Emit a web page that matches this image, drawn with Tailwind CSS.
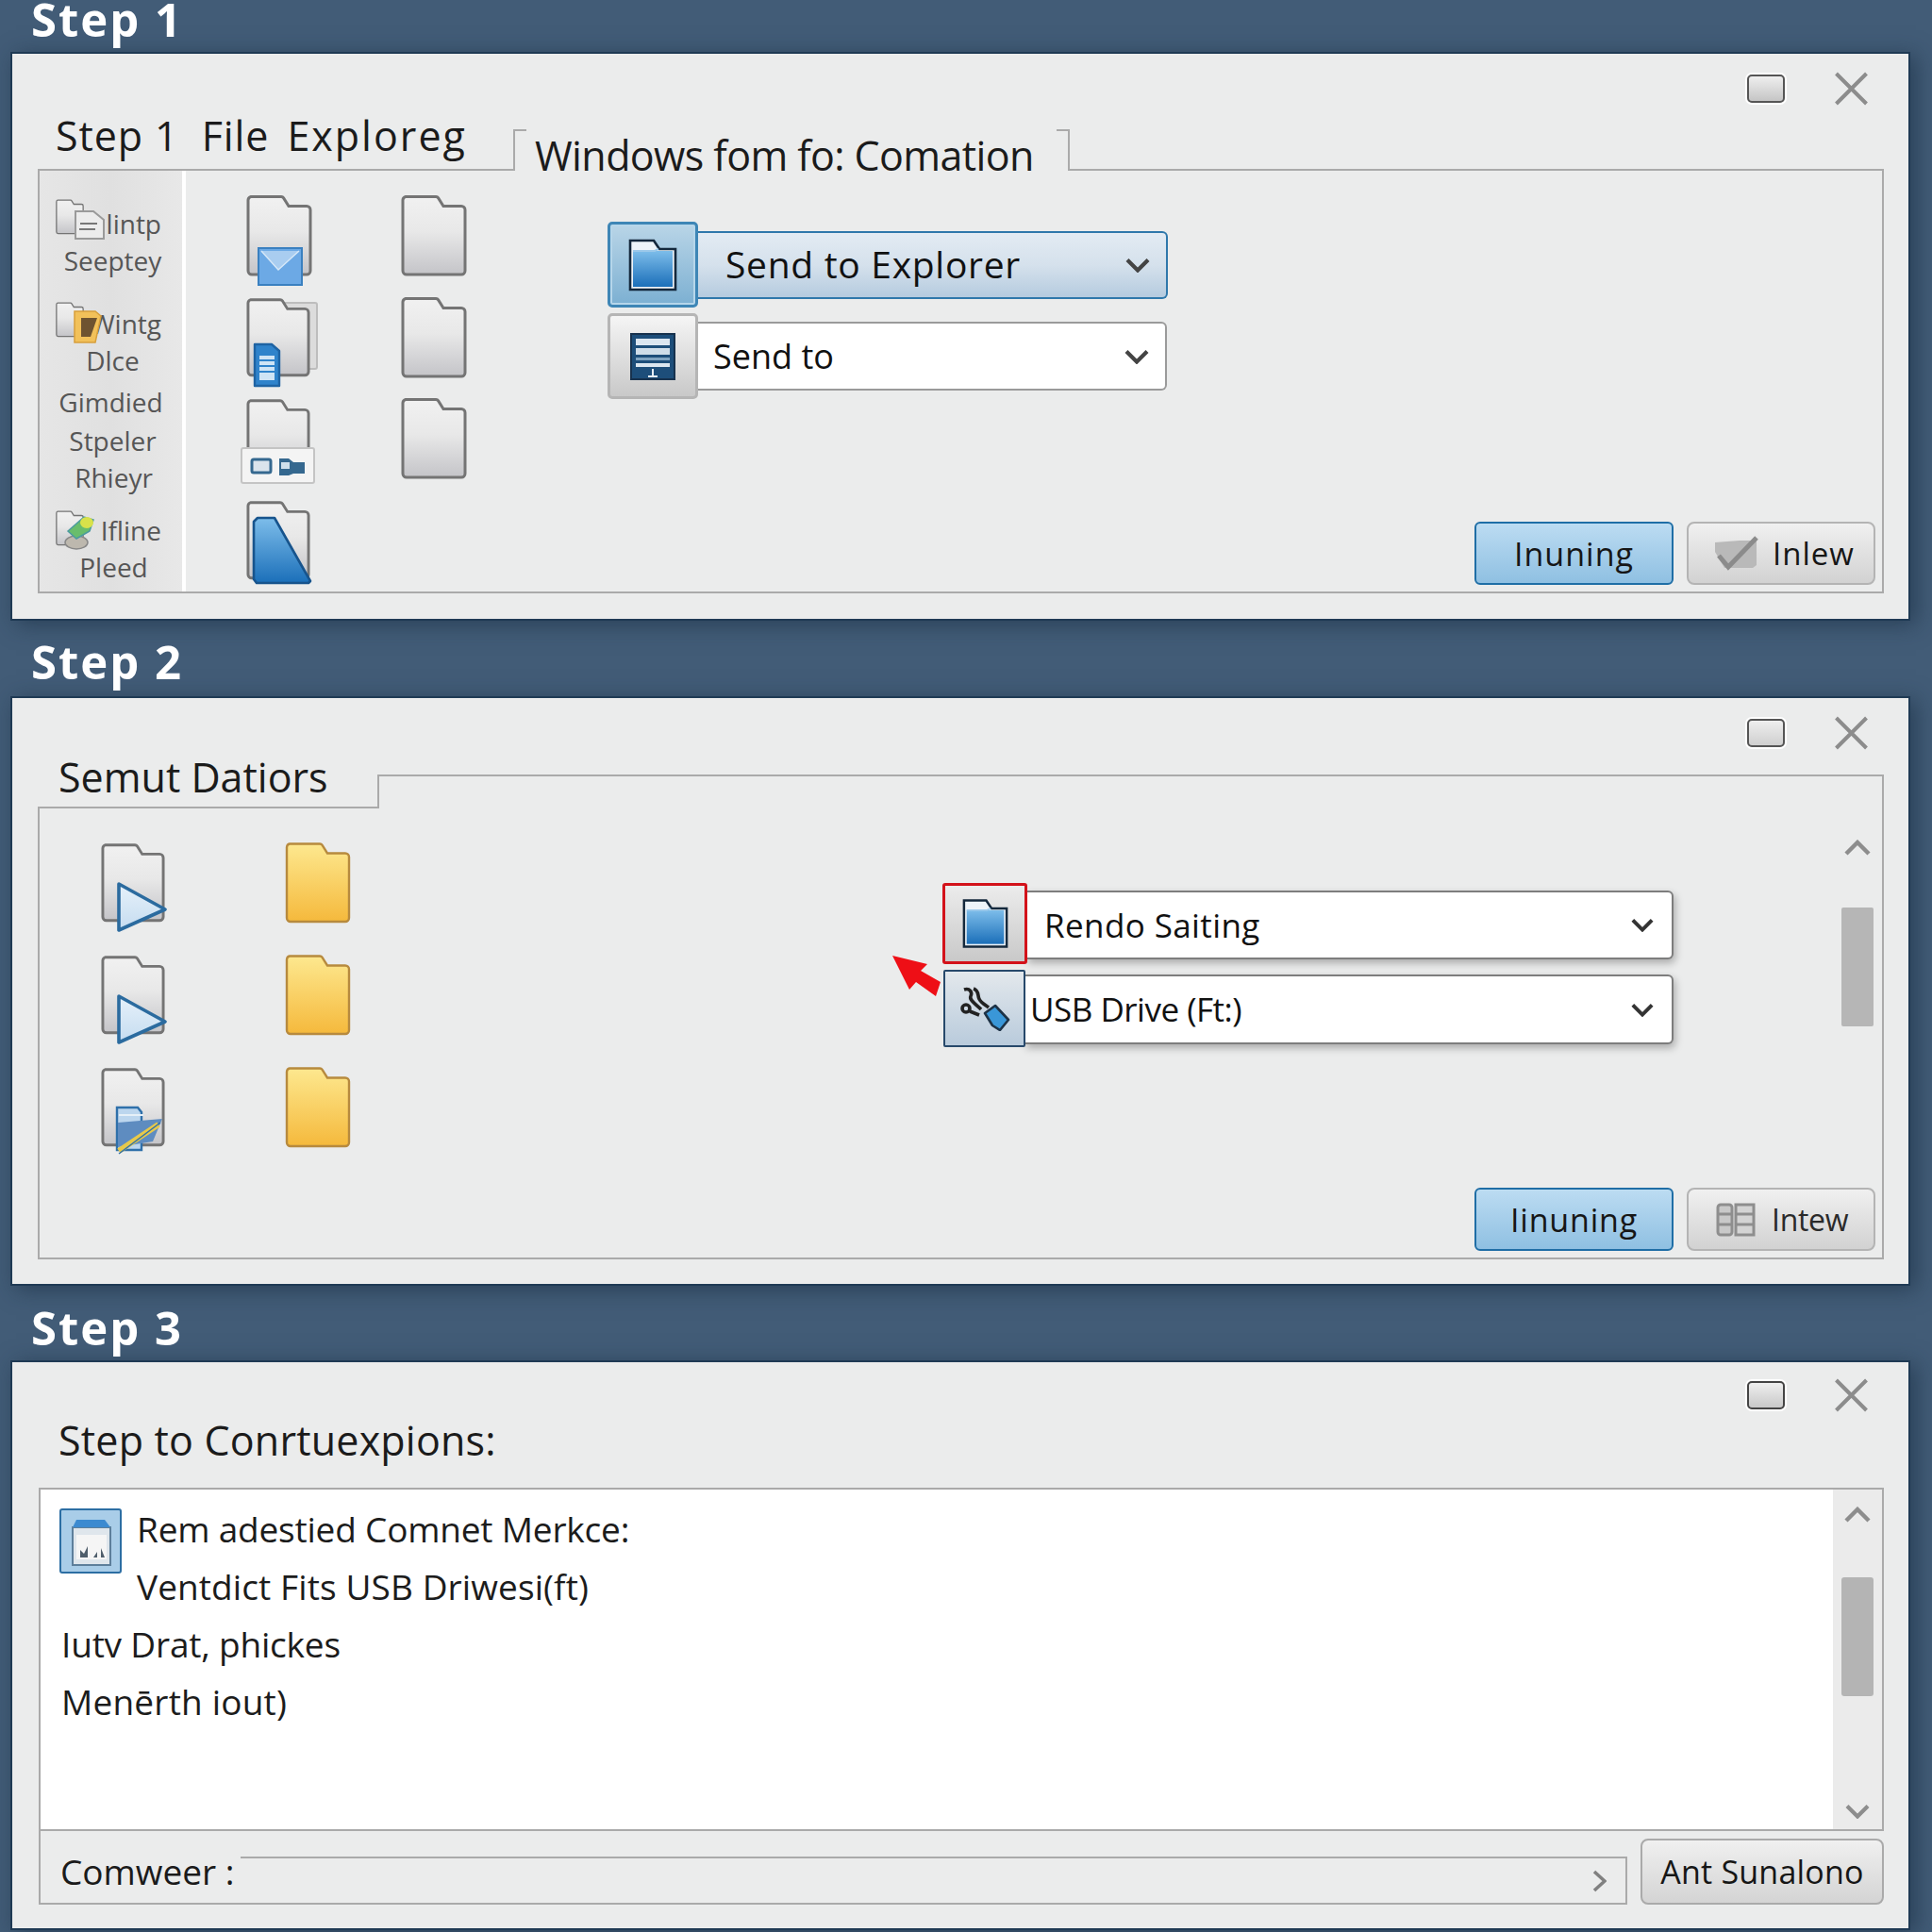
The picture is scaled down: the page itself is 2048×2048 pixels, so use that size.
<!DOCTYPE html>
<html>
<head>
<meta charset="utf-8">
<script src="https://cdn.jsdelivr.net/npm/@tailwindcss/browser@4"></script>
</head>
<body class="m-0 w-[2048px] h-[2048px] overflow-hidden bg-[#425c77] font-['Open_Sans',sans-serif] text-[#1b1b1b]">
<svg class="absolute w-0 h-0" aria-hidden="true">
  <defs>
    <linearGradient id="g-gray" x1="0" y1="0" x2="0" y2="1"><stop offset="0" stop-color="#f1f1f1"/><stop offset=".45" stop-color="#e8e8e8"/><stop offset="1" stop-color="#c4c4c8"/></linearGradient>
    <linearGradient id="g-yellow" x1="0" y1="0" x2="0" y2="1"><stop offset="0" stop-color="#fde88f"/><stop offset="1" stop-color="#f5b93c"/></linearGradient>
    <linearGradient id="g-blue" x1="0" y1="0" x2="0" y2="1"><stop offset="0" stop-color="#7dbdea"/><stop offset="1" stop-color="#1b6fb9"/></linearGradient>
    <linearGradient id="g-play" x1="0" y1="0" x2="0" y2="1"><stop offset="0" stop-color="#e6f1fa"/><stop offset="1" stop-color="#c5dcf0"/></linearGradient>
    <symbol id="folder" viewBox="0 0 70 86"><path d="M5 1.5H37a3 3 0 0 1 2.6 1.4L45 11.5H64a4 4 0 0 1 4 4V80a4 4 0 0 1-4 4H6a4 4 0 0 1-4-4V5a4 4 0 0 1 3-3.5Z" fill="url(#g-gray)" stroke="#747474" stroke-width="3"/></symbol>
    <symbol id="yfolder" viewBox="0 0 70 86"><path d="M5 1.5H37a3 3 0 0 1 2.6 1.4L45 11.5H64a4 4 0 0 1 4 4V80a4 4 0 0 1-4 4H6a4 4 0 0 1-4-4V5a4 4 0 0 1 3-3.5Z" fill="url(#g-yellow)" stroke="#b78a3e" stroke-width="2.4"/></symbol>
    <symbol id="bluefolder" viewBox="0 0 52 56"><path d="M2 2H27L33 11H50V54H2Z" fill="#eef4f9" stroke="#14283c" stroke-width="2.6"/><rect x="5" y="13" width="42" height="38" fill="url(#g-blue)"/><path d="M5 13H28L32 11" fill="none" stroke="#9cc9ea" stroke-width="2"/></symbol>
    <symbol id="chev" viewBox="0 0 26 16"><path d="M2 2.5L13 13.5L24 2.5" fill="none" stroke="currentColor" stroke-width="4.2"/></symbol>
    <symbol id="play" viewBox="0 0 54 55"><path d="M3 3L52 30L3 52Z" fill="url(#g-play)" stroke="#2b6b9f" stroke-width="3.6" stroke-linejoin="round"/></symbol>
    <symbol id="close" viewBox="0 0 36 36"><path d="M2 2L34 34M34 2L2 34" stroke="#8c8c8c" stroke-width="4" fill="none"/></symbol>
    <symbol id="up" viewBox="0 0 28 17"><path d="M2 15L14 3L26 15" fill="none" stroke="#8d8d8d" stroke-width="4.4"/></symbol>
  </defs>
</svg>

<!-- STEP 1 -->
<div class="h-[55px] pl-[33px] pb-[17px] flex items-end"><h2 class="text-[49px] leading-[36px] font-bold text-white tracking-[2px]">Step 1</h2></div>
<section class="ml-[11px] w-[2014px] h-[603px] box-border border-2 border-[#1f3a54] bg-[#ebecec] shadow-[6px_4px_22px_rgba(20,40,60,0.55)] pt-[21px] flex flex-col">
  <div class="h-[32px] flex items-center justify-end pr-[42px] gap-[52px]">
    <div class="w-[40px] h-[30px] rounded-[5px] border-2 border-[#555] bg-gradient-to-b from-[#efefef] to-[#c5c5c5] shadow-[0_0_0_2px_#fff]"></div>
    <svg class="w-[37px] h-[36px]"><use href="#close"/></svg>
  </div>
  <div class="mt-[27px] h-[44px] ml-[27px] mr-[26px] flex flex-none">
    <div class="w-[504px] h-[44px] border-b-2 border-[#aaaaaa]">
      <h3 class="-mt-[15px] pl-[19px] text-[43px] leading-none whitespace-pre tracking-[0.9px]">Step 1  File <span class="inline-block ml-[7px] tracking-[2px]">Exploreg</span></h3>
    </div>
    <div class="relative w-[590px] h-[44px] border-x-2 border-[#aaaaaa]">
      <span class="absolute -left-[2px] top-0 w-[14px] h-[2px] bg-[#aaaaaa]"></span>
      <span class="absolute -right-[2px] top-0 w-[14px] h-[2px] bg-[#aaaaaa]"></span>
      <h3 class="pl-[21px] pt-[6px] text-[43px] leading-none whitespace-pre tracking-[-0.6px]">Windows fom fo: Comation</h3>
    </div>
    <div class="flex-1 h-[44px] border-b-2 border-[#aaaaaa]"></div>
  </div>
  <div class="ml-[27px] mr-[26px] h-[448px] flex flex-none border-x-2 border-b-2 border-[#aaaaaa]">
    <div class="w-[151px] h-full pt-[37px] bg-gradient-to-r from-[#e6e6e6] via-[#e0e0e0] to-[#e8e8e8] text-[#565656] text-[28px] leading-[39px] text-center">
      <div class="relative text-right"><span class="pr-[22px]">lintp</span>
        <svg class="absolute left-[17px] -top-[12px] w-[30px] h-[48px]"><use href="#folder"/></svg>
        <svg class="absolute left-[35px] top-[5px] w-[34px] h-[32px]" viewBox="0 0 34 32"><path d="M3 1H22L33 10V30H3Z" fill="#ececec" stroke="#9a9a9a" stroke-width="2"/><path d="M8 14H26M7 20H24" stroke="#777" stroke-width="2"/></svg>
      </div>
      <div class="pl-[4px]">Seeptey</div>
      <div class="relative mt-[28px] text-right"><span class="pr-[22px]">Wintg</span>
        <svg class="absolute left-[17px] -top-[9px] w-[30px] h-[48px]"><use href="#folder"/></svg>
        <svg class="absolute left-[35px] top-[1px] w-[32px] h-[41px]" viewBox="0 0 32 41"><path d="M2 5H24L30 10L24 38H2Z" fill="#f2c15a" stroke="#d79f3b" stroke-width="1.5"/><path d="M9 12H26L19 32H9Z" fill="#6e5330"/></svg>
      </div>
      <div class="pl-[4px]">Dlce</div>
      <div class="mt-[5px]">Gimdied</div>
      <div class="mt-[2px] pl-[4px]">Stpeler</div>
      <div class="pl-[6px]">Rhieyr</div>
      <div class="relative mt-[17px] text-right"><span class="pr-[22px]">Ifline</span>
        <svg class="absolute left-[17px] -top-[7px] w-[30px] h-[48px]"><use href="#folder"/></svg>
        <svg class="absolute left-[25px] top-[2px] w-[36px] h-[38px]" viewBox="0 0 36 38"><ellipse cx="14" cy="30" rx="12" ry="7" fill="#bdb8ae" stroke="#888" stroke-width="1.5"/><path d="M5 18L22 3L32 6L28 18L14 26Z" fill="#69bd6c" stroke="#4b9aa0" stroke-width="1.5"/><ellipse cx="25" cy="9" rx="7" ry="6" fill="#d9e24a"/></svg>
      </div>
      <div class="pl-[6px]">Pleed</div>
    </div>
    <div class="w-[4px] h-full bg-white"></div>
    <div class="w-[64px]"></div>
    <div class="pt-[26px] grid grid-cols-[164px_70px] auto-rows-[107.5px] content-start">
      <div class="relative w-[70px] h-[86px]"><svg class="w-[70px] h-[86px]"><use href="#folder"/></svg>
        <svg class="absolute left-[12px] top-[55px] w-[48px] h-[41px]" viewBox="0 0 48 41"><rect x="1" y="1" width="46" height="39" fill="#6ca9e5" stroke="#3a80c0" stroke-width="2"/><path d="M4 4L22 24L44 4" fill="#a9cdf0" stroke="#d6e8f8" stroke-width="1.5"/></svg></div>
      <div class="w-[70px] h-[86px]"><svg class="w-[70px] h-[86px]"><use href="#folder"/></svg></div>
      <div class="relative w-[70px] h-[86px]">
        <div class="absolute left-[12px] top-[5px] w-[64px] h-[72px] rounded-[3px] border-2 border-[#bdbdbd] bg-[#dcdcdc]"></div>
        <svg class="absolute left-0 top-0 w-[68px] h-[86px]"><use href="#folder"/></svg>
        <svg class="absolute left-[6px] top-[48px] w-[31px] h-[48px]" viewBox="0 0 31 48"><path d="M3 2H21L29 9V46H3Z" fill="#2f83cb" stroke="#1e63a3" stroke-width="2.4" stroke-linejoin="round"/><path d="M8 14H24V40H8Z" fill="#cfe4f5"/><path d="M8 19H24M8 25H24M8 31H24" stroke="#2f83cb" stroke-width="2"/></svg></div>
      <div class="w-[70px] h-[86px]"><svg class="w-[70px] h-[86px]"><use href="#folder"/></svg></div>
      <div class="relative w-[70px] h-[86px]"><svg class="w-[68px] h-[86px]"><use href="#folder"/></svg>
        <div class="absolute -left-[6px] top-[52px] w-[79px] h-[39px] rounded-[3px] border-2 border-[#c4c4c4] bg-[#f4f4f4] flex items-center justify-center">
          <svg class="w-[60px] h-[24px]" viewBox="0 0 60 24"><rect x="2" y="5" width="20" height="14" rx="2" fill="#dbe4ec" stroke="#35688f" stroke-width="3"/><path d="M31 4H41L46 8H58V20H46L41 22H31Z" fill="#35688f"/><rect x="33" y="8" width="9" height="7" fill="#cfe0ec"/></svg>
        </div></div>
      <div class="w-[70px] h-[86px]"><svg class="w-[70px] h-[86px]"><use href="#folder"/></svg></div>
      <div class="relative w-[70px] h-[86px]"><svg class="w-[68px] h-[86px]"><use href="#folder"/></svg>
        <svg class="absolute left-[6px] top-[16px] w-[64px] h-[74px]" viewBox="0 0 64 74"><path d="M6 3H24L62 70L60 72H5L2 68V7Z" fill="url(#g-blue)" stroke="#17548d" stroke-width="2.6" stroke-linejoin="round"/></svg></div>
    </div>
    <div class="flex-1 flex flex-col pl-[149px] pt-[54px] pr-[7px] pb-[7px]">
      <div class="flex items-center w-[594px] h-[91px]">
        <div class="w-[96px] h-[91px] flex-none box-border rounded-[5px] border-[3px] border-[#3e86b6] bg-gradient-to-b from-[#b9d5e7] to-[#7cb0d2] shadow-[inset_0_0_0_2px_#b6d6ea] flex items-center justify-center z-10"><svg class="w-[52px] h-[56px]"><use href="#bluefolder"/></svg></div>
        <div class="flex-1 h-[72px] -ml-[1px] rounded-r-[6px] border-2 border-l-0 border-[#2f78ab] bg-gradient-to-b from-[#e3ebf3] via-[#d5e1ec] to-[#b5cbdf] flex items-center justify-between pl-[30px] pr-[17px]">
          <span class="text-[39px] leading-none tracking-[0.7px] text-[#111] -mt-[2px]">Send to Explorer</span>
          <svg class="w-[26px] h-[16px] text-[#444]"><use href="#chev"/></svg>
        </div>
      </div>
      <div class="mt-[6px] flex items-center w-[593px] h-[91px]">
        <div class="w-[96px] h-[91px] flex-none box-border rounded-[5px] border-[3px] border-[#b5b5b5] bg-gradient-to-b from-[#f5f5f5] to-[#c9c9c9] flex items-center justify-center z-10">
          <svg class="w-[48px] h-[50px]" viewBox="0 0 48 50"><rect x="1" y="1" width="46" height="48" fill="#1d4e7a" stroke="#17324e" stroke-width="2"/><rect x="6" y="6" width="36" height="7" fill="#dbe6f0"/><rect x="6" y="16" width="36" height="7" fill="#cfdde9"/><rect x="6" y="26" width="36" height="3" fill="#7ea3c1"/><rect x="6" y="32" width="36" height="4" fill="#dbe6f0"/><path d="M24 38V46M19 46H29" stroke="#e6eef5" stroke-width="2"/></svg></div>
        <div class="flex-1 h-[73px] -ml-[1px] rounded-r-[6px] border-2 border-l-0 border-[#9a9a9a] bg-white flex items-center justify-between pl-[17px] pr-[17px]">
          <span class="text-[36px] leading-none text-[#111]">Send to</span>
          <svg class="w-[26px] h-[16px] text-[#444]"><use href="#chev"/></svg>
        </div>
      </div>
      <div class="mt-auto self-end flex gap-[14px]">
        <button class="w-[211px] h-[67px] rounded-[6px] border-2 border-[#1f6ea6] bg-gradient-to-b from-[#bcdcf2] to-[#8fc0e2] text-[34px] leading-none tracking-[1px] text-[#161616]">Inuning</button>
        <button class="w-[200px] h-[67px] rounded-[8px] border-2 border-[#b4b4b4] bg-gradient-to-b from-[#f0f0f0] to-[#d2d2d2] flex items-center pl-[26px] gap-[15px] text-[33px] leading-none tracking-[1px] text-[#161616]">
          <svg class="w-[48px] h-[40px]" viewBox="0 0 48 40"><path d="M2 8L28 6L46 6V32L42 35H12L2 18Z" fill="#b9b9b9"/><path d="M6 22L16 34L46 3" fill="none" stroke="#8b8b8b" stroke-width="5"/></svg>
          <span>Inlew</span>
        </button>
      </div>
    </div>
  </div>
</section>

<!-- STEP 2 -->
<div class="h-[80px] pl-[33px] pb-[19px] flex items-end"><h2 class="text-[49px] leading-[36px] font-bold text-white tracking-[2px]">Step 2</h2></div>
<section class="ml-[11px] w-[2014px] h-[625px] box-border border-2 border-[#1f3a54] bg-[#ebecec] shadow-[6px_4px_22px_rgba(20,40,60,0.55)] pt-[21px] flex flex-col">
  <div class="h-[32px] flex items-center justify-end pr-[42px] gap-[52px]">
    <div class="w-[40px] h-[30px] rounded-[5px] border-2 border-[#555] bg-gradient-to-b from-[#efefef] to-[#cfcfcf] shadow-[0_0_0_2px_#fff]"></div>
    <svg class="w-[37px] h-[36px]"><use href="#close"/></svg>
  </div>
  <div class="mt-[28px] h-[36px] ml-[27px] mr-[26px] flex flex-none">
    <div class="w-[362px] h-[36px] border-b-2 border-r-2 border-[#aaaaaa]">
      <h3 class="-mt-[19px] pl-[22px] text-[43px] leading-none whitespace-pre">Semut Datiors</h3>
    </div>
    <div class="flex-1 h-[36px] border-t-2 border-r-2 border-[#aaaaaa]"></div>
  </div>
  <div class="ml-[27px] mr-[26px] h-[478px] flex flex-none flex-col border-x-2 border-b-2 border-[#aaaaaa]">
    <div class="flex-1 flex min-h-0">
      <div class="pl-[65px] pt-[36px] grid grid-cols-[195px_70px] auto-rows-[119px] content-start">
        <div class="relative w-[70px] h-[86px]"><svg class="w-[68px] h-[86px]"><use href="#folder"/></svg><svg class="absolute left-[16px] top-[41px] w-[54px] h-[55px]"><use href="#play"/></svg></div>
        <svg class="w-[70px] h-[86px]"><use href="#yfolder"/></svg>
        <div class="relative w-[70px] h-[86px]"><svg class="w-[68px] h-[86px]"><use href="#folder"/></svg><svg class="absolute left-[16px] top-[41px] w-[54px] h-[55px]"><use href="#play"/></svg></div>
        <svg class="w-[70px] h-[86px]"><use href="#yfolder"/></svg>
        <div class="relative w-[70px] h-[86px]"><svg class="w-[68px] h-[86px]"><use href="#folder"/></svg>
          <svg class="absolute left-[15px] top-[41px] w-[52px] h-[53px]" viewBox="0 0 52 53"><path d="M2 2H24L28 7V47H2Z" fill="#bcd6ee" stroke="#2f70aa" stroke-width="2.4"/><path d="M3 18L50 14L40 38L3 44Z" fill="#5e8cc0"/><path d="M4 10H30" stroke="#e6f0f8" stroke-width="2"/><path d="M4 48L46 20" stroke="#e7c94a" stroke-width="6"/><path d="M4 51L48 18" stroke="#2f70aa" stroke-width="1.5" fill="none"/></svg></div>
        <svg class="w-[70px] h-[86px]"><use href="#yfolder"/></svg>
      </div>
      <div class="pl-[627px] pt-[79px]">
        <div class="flex items-center w-[775px] h-[86px]">
          <div class="w-[90px] h-[86px] flex-none box-border rounded-[3px] border-[3px] border-[#d3121a] bg-gradient-to-b from-[#ececec] to-[#c9c9c9] flex items-center justify-center z-10"><svg class="w-[49px] h-[54px]"><use href="#bluefolder"/></svg></div>
          <div class="flex-1 h-[73px] mt-[2px] -ml-[1px] rounded-r-[6px] border-2 border-l-0 border-[#7d7d7d] bg-white shadow-[2px_4px_8px_rgba(0,0,0,0.28)] flex items-center justify-between pl-[19px] pr-[19px]">
            <span class="text-[35px] leading-none tracking-[0.4px] text-[#111]">Rendo Saiting</span>
            <svg class="w-[24px] h-[15px] text-[#333]"><use href="#chev"/></svg>
          </div>
        </div>
        <div class="relative mt-[6px] flex items-center w-[775px] h-[82px] pl-[1px]">
          <svg class="absolute -left-[54px] -top-[16px] w-[53px] h-[44px]" viewBox="0 0 53 44"><path d="M1 1L38 10L31 17L52 29L47 44L26 29L19 37Z" fill="#ee0f16"/></svg>
          <div class="w-[87px] h-[82px] flex-none box-border rounded-[2px] border-2 border-[#27496b] bg-gradient-to-b from-[#e3e8ec] to-[#b9cbdc] flex items-center justify-center z-10">
            <svg class="w-[56px] h-[48px]" viewBox="0 0 56 48"><path d="M6 4C12 2 15 7 13 11C11 15 18 19 24 25" fill="none" stroke="#222" stroke-width="3.6"/><path d="M16 3C22 5 20 10 22 14C24 18 28 20 32 23" fill="none" stroke="#222" stroke-width="3.6"/><circle cx="8" cy="24" r="4" fill="none" stroke="#222" stroke-width="3.6"/><path d="M12 27L22 31" stroke="#222" stroke-width="3.6"/><path d="M28 29L39 21L53 36L44 47L36 42Z" fill="#3a97d8" stroke="#1d3246" stroke-width="2.6" stroke-linejoin="round"/></svg></div>
          <div class="flex-1 h-[74px] mt-[2px] -ml-[1px] rounded-r-[6px] border-2 border-l-0 border-[#7d7d7d] bg-white shadow-[2px_4px_8px_rgba(0,0,0,0.28)] flex items-center justify-between pl-[6px] pr-[19px]">
            <span class="text-[35px] leading-none text-[#111] tracking-[-0.5px] -mt-[2px]">USB Drive (Ft:)</span>
            <svg class="w-[24px] h-[15px] text-[#333]"><use href="#chev"/></svg>
          </div>
        </div>
      </div>
      <div class="ml-auto mr-[9px] w-[34px] flex flex-col items-center pt-[33px]">
        <svg class="w-[28px] h-[17px]"><use href="#up"/></svg>
        <div class="mt-[55px] w-[34px] h-[126px] rounded-[2px] bg-[#b6b6b6]"></div>
      </div>
    </div>
    <div class="flex justify-end gap-[14px] pr-[7px] pb-[7px]">
      <button class="w-[211px] h-[67px] rounded-[6px] border-2 border-[#1f6ea6] bg-gradient-to-b from-[#bcdcf2] to-[#8fc0e2] text-[34px] leading-none tracking-[0.8px] text-[#161616]">Iinuning</button>
      <button class="w-[200px] h-[67px] rounded-[8px] border-2 border-[#b4b4b4] bg-gradient-to-b from-[#f0f0f0] to-[#d2d2d2] flex items-center pl-[29px] gap-[17px] text-[32px] leading-none tracking-[-0.3px] text-[#2a2a2a]">
        <svg class="w-[42px] h-[36px]" viewBox="0 0 42 36"><rect x="2" y="2" width="15" height="32" rx="3" fill="#c9c9c9" stroke="#8e8e8e" stroke-width="3"/><path d="M2 12H17M2 23H17" stroke="#8e8e8e" stroke-width="3"/><path d="M21 2H40V34H21Z" fill="#d4d4d4" stroke="#8e8e8e" stroke-width="3"/><path d="M21 12H40M21 23H40" stroke="#8e8e8e" stroke-width="3"/></svg>
        <span>Intew</span>
      </button>
    </div>
  </div>
</section>

<!-- STEP 3 -->
<div class="h-[79px] pl-[33px] pb-[17px] flex items-end"><h2 class="text-[49px] leading-[36px] font-bold text-white tracking-[2px]">Step 3</h2></div>
<section class="ml-[11px] w-[2014px] h-[604px] box-border border-2 border-[#1f3a54] bg-[#ebecec] shadow-[6px_4px_22px_rgba(20,40,60,0.55)] pt-[19px] flex flex-col">
  <div class="h-[32px] flex items-center justify-end pr-[42px] gap-[52px]">
    <div class="w-[40px] h-[30px] rounded-[5px] border-2 border-[#444] bg-gradient-to-b from-[#efefef] to-[#c8c8c8] shadow-[0_0_0_2px_#fff]"></div>
    <svg class="w-[37px] h-[36px]"><use href="#close"/></svg>
  </div>
  <h3 class="mt-[10px] h-[72px] pl-[49px] text-[43px] leading-none whitespace-pre tracking-[0.2px]">Step to Conrtuexpions:</h3>
  <div class="ml-[28px] mr-[26px] h-[364px] flex flex-none border-2 border-[#aaaaaa]">
    <div class="flex-1 bg-white pt-[11px] text-[37px] leading-[61px] text-[#1c1c1c]">
      <div class="flex pl-[20px]">
        <svg class="mt-[9px] w-[66px] h-[69px] flex-none" viewBox="0 0 66 69"><rect x="1" y="1" width="64" height="67" rx="2" fill="#a9cde8" stroke="#2c6ea3" stroke-width="2"/><rect x="14" y="20" width="40" height="40" fill="#dfe6ec" stroke="#5d7f9b" stroke-width="2"/><path d="M14 20L18 12H48L54 20Z" fill="#3c8ad0"/><rect x="18" y="28" width="32" height="26" fill="#f5f5f5"/><path d="M22 52V44L26 48L30 40V52ZM36 52L40 46V52ZM44 52V42L48 52Z" fill="#4f5e6b"/></svg>
        <div class="ml-[16px]">
          <div class="whitespace-pre tracking-[-0.2px]">Rem adestied Comnet Merkce:</div>
          <div class="whitespace-pre tracking-[0.1px]">Ventdict Fits USB Driwesi(ft)</div>
        </div>
      </div>
      <div class="pl-[22px] whitespace-pre tracking-[-0.2px]">Iutv Drat, phickes</div>
      <div class="pl-[22px] whitespace-pre tracking-[0.2px]">Menērth iout)</div>
    </div>
    <div class="w-[52px] bg-[#ebebeb] flex flex-col items-center pt-[18px] pb-[11px]">
      <svg class="w-[28px] h-[17px]"><use href="#up"/></svg>
      <div class="mt-[58px] w-[34px] h-[126px] rounded-[3px] bg-[#b4b4b4]"></div>
      <svg class="mt-auto w-[28px] h-[16px] text-[#8d8d8d]"><use href="#chev"/></svg>
    </div>
  </div>
  <div class="ml-[28px] mr-[25px] h-[78px] flex flex-none items-end gap-[14px]">
    <div class="w-[1684px] h-[78px] flex items-end border-l-2 border-b-2 border-[#aaaaaa]">
      <div class="w-[212px] h-[50px] pl-[21px] text-[37px] leading-[34px] whitespace-pre">Comweer :</div>
      <div class="flex-1 h-[49px] border-t-2 border-r-2 border-[#aaaaaa] flex items-center justify-end pr-[20px]">
        <svg class="w-[15px] h-[24px]" viewBox="0 0 15 24"><path d="M2 2L13 12L2 22" fill="none" stroke="#808080" stroke-width="3.6"/></svg>
      </div>
    </div>
    <button class="w-[258px] h-[70px] rounded-[8px] border-2 border-[#aaaaaa] bg-gradient-to-b from-[#f0f0f0] to-[#d4d4d4] text-[34px] leading-none tracking-[0.2px] text-[#161616]">Ant Sunalono</button>
  </div>
</section>
</body>
</html>
